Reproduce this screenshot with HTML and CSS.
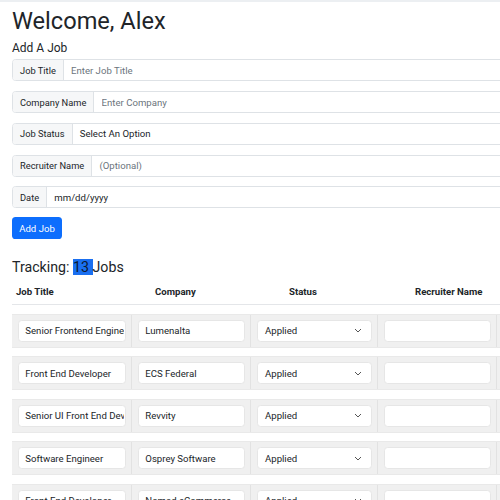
FILE: index.html
```html
<!DOCTYPE html>
<html lang="en">
<head>
<meta charset="utf-8">
<title>Job Tracker</title>
<link rel="stylesheet" href="styles.css">
</head>
<body>
<div class="topline"></div>
<main class="page">
  <h1 class="welcome">Welcome, Alex</h1>
  <h2 class="section-title">Add A Job</h2>
  <form class="job-form">
    <div class="input-group"><span class="ig-label">Job Title</span><input class="ig-control" type="text" placeholder="Enter Job Title"></div>
    <div class="input-group"><span class="ig-label">Company Name</span><input class="ig-control" type="text" placeholder="Enter Company"></div>
    <div class="input-group"><span class="ig-label">Job Status</span><span class="ig-control ig-value">Select An Option</span></div>
    <div class="input-group"><span class="ig-label">Recruiter Name</span><input class="ig-control" type="text" placeholder="(Optional)"></div>
    <div class="input-group"><span class="ig-label">Date</span><span class="ig-control ig-value">mm/dd/yyyy</span></div>
    <button class="btn-add" type="button">Add Job</button>
  </form>
  <h3 class="tracking">Tracking: <span class="sel">13 </span>Jobs</h3>
  <div class="jobs">
    <div class="jobs-head">
      <div class="th th-title">Job Title</div>
      <div class="th th-company">Company</div>
      <div class="th th-status">Status</div>
      <div class="th th-recruiter">Recruiter Name</div>
    </div>
    <div class="job-row">
      <div class="td"><input class="cell-input" type="text" value="Senior Frontend Engineer"></div>
      <div class="td"><input class="cell-input" type="text" value="Lumenalta"></div>
      <div class="td"><div class="cell-select">Applied<svg class="chev" viewBox="0 0 8 5" width="8" height="5"><path d="M1 1l3 3 3-3" fill="none" stroke="#555" stroke-width="1"/></svg></div></div>
      <div class="td"><input class="cell-input" type="text" value=""></div>
      <div class="td"></div>
    </div>
    <div class="job-row">
      <div class="td"><input class="cell-input" type="text" value="Front End Developer"></div>
      <div class="td"><input class="cell-input" type="text" value="ECS Federal"></div>
      <div class="td"><div class="cell-select">Applied<svg class="chev" viewBox="0 0 8 5" width="8" height="5"><path d="M1 1l3 3 3-3" fill="none" stroke="#555" stroke-width="1"/></svg></div></div>
      <div class="td"><input class="cell-input" type="text" value=""></div>
      <div class="td"></div>
    </div>
    <div class="job-row">
      <div class="td"><input class="cell-input" type="text" value="Senior UI Front End Developer"></div>
      <div class="td"><input class="cell-input" type="text" value="Revvity"></div>
      <div class="td"><div class="cell-select">Applied<svg class="chev" viewBox="0 0 8 5" width="8" height="5"><path d="M1 1l3 3 3-3" fill="none" stroke="#555" stroke-width="1"/></svg></div></div>
      <div class="td"><input class="cell-input" type="text" value=""></div>
      <div class="td"></div>
    </div>
    <div class="job-row">
      <div class="td"><input class="cell-input" type="text" value="Software Engineer"></div>
      <div class="td"><input class="cell-input" type="text" value="Osprey Software"></div>
      <div class="td"><div class="cell-select">Applied<svg class="chev" viewBox="0 0 8 5" width="8" height="5"><path d="M1 1l3 3 3-3" fill="none" stroke="#555" stroke-width="1"/></svg></div></div>
      <div class="td"><input class="cell-input" type="text" value=""></div>
      <div class="td"></div>
    </div>
    <div class="job-row">
      <div class="td"><input class="cell-input" type="text" value="Front End Developer"></div>
      <div class="td"><input class="cell-input" type="text" value="Nomad eCommerce"></div>
      <div class="td"><div class="cell-select">Applied<svg class="chev" viewBox="0 0 8 5" width="8" height="5"><path d="M1 1l3 3 3-3" fill="none" stroke="#555" stroke-width="1"/></svg></div></div>
      <div class="td"><input class="cell-input" type="text" value=""></div>
      <div class="td"></div>
    </div>
  </div>
</main>
</body>
</html>
```
FILE: styles.css
```css
html, body {
  margin: 0;
  padding: 0;
  overflow: hidden;
  background: #fff;
}
body {
  font-family: Roboto, "Liberation Sans", sans-serif;
  color: #212529;
}
.topline {
  height: 2px;
  background: #eceff2;
}
.page {
  padding-left: 12px;
  width: 620px;
}
.welcome {
  margin: 5px 0 0;
  font-size: 23.6px;
  font-weight: 400;
  line-height: 1.2;
}
.section-title {
  margin: 5.6px 0 0;
  font-size: 12px;
  font-weight: 400;
  line-height: 1.2;
}
.job-form {
  margin-top: 4.2px;
}
.input-group {
  display: flex;
  height: 22px;
  margin-bottom: 9.75px;
  border: 1px solid #dee2e6;
  border-radius: 3.6px;
  box-sizing: border-box;
  overflow: hidden;
}
.ig-label {
  display: flex;
  align-items: center;
  padding: 0 7px;
  background: #f6f7f8;
  border-right: 1px solid #dee2e6;
  font-size: 9.3px;
  color: #212529;
  white-space: nowrap;
}
.ig-control {
  flex: 1;
  border: 0;
  outline: none;
  padding: 0 7.2px;
  font-family: inherit;
  font-size: 9.6px;
  color: #212529;
  background: #fff;
  display: flex;
  align-items: center;
}
.ig-control::placeholder {
  color: #6c757d;
}
.btn-add {
  display: block;
  margin-top: -0.75px;
  height: 22px;
  padding: 0 7.2px;
  border: 0;
  border-radius: 3.6px;
  background: #0d6efd;
  color: #fff;
  font-family: inherit;
  font-size: 9.6px;
}
.tracking {
  margin: 19.8px 0 0;
  font-size: 14.2px;
  font-weight: 400;
  line-height: 1.2;
}
.sel {
  background: #1a6ff0;
  color: #0c1a33;
}
.jobs {
  display: flex;
  flex-direction: column;
  gap: 8.5px;
}
.jobs-head {
  display: flex;
  padding: 9px 0 4.6px;
  margin-bottom: 0.5px;
  border-bottom: 1px solid #e4e6e9;
  font-size: 9.6px;
  font-weight: 700;
  line-height: 14px;
  width: 600px;
}
.th-title { padding-left: 4px; width: 139px; }
.th-company { width: 134px; }
.th-status { width: 126px; }
.job-row {
  display: grid;
  grid-template-columns: 119px 119px 127px 119px 119px;
  background: #f0f0f0;
  border-top: 1px solid #e9e9e9;
  border-bottom: 1px solid #e9e9e9;
  height: 34px;
  box-sizing: border-box;
}
.td {
  padding: 5px 5px 0 6px;
  border-left: 1px solid #e2e2e2;
}
.td:first-child {
  border-left: 0;
}
.cell-input {
  display: block;
  width: 100%;
  height: 22px;
  box-sizing: border-box;
  border: 1px solid #e6e6e6;
  border-radius: 3.6px;
  background: #fff;
  padding: 0 1px 0 6.3px;
  font-family: inherit;
  font-size: 9.6px;
  color: #212529;
  outline: none;
}
.cell-select {
  height: 22px;
  box-sizing: border-box;
  border: 1px solid #e6e6e6;
  border-radius: 3.6px;
  background: #fff;
  padding: 0 9px 0 7px;
  font-size: 9.6px;
  color: #212529;
  display: flex;
  align-items: center;
  justify-content: space-between;
}
.chev {
  display: block;
}
```
